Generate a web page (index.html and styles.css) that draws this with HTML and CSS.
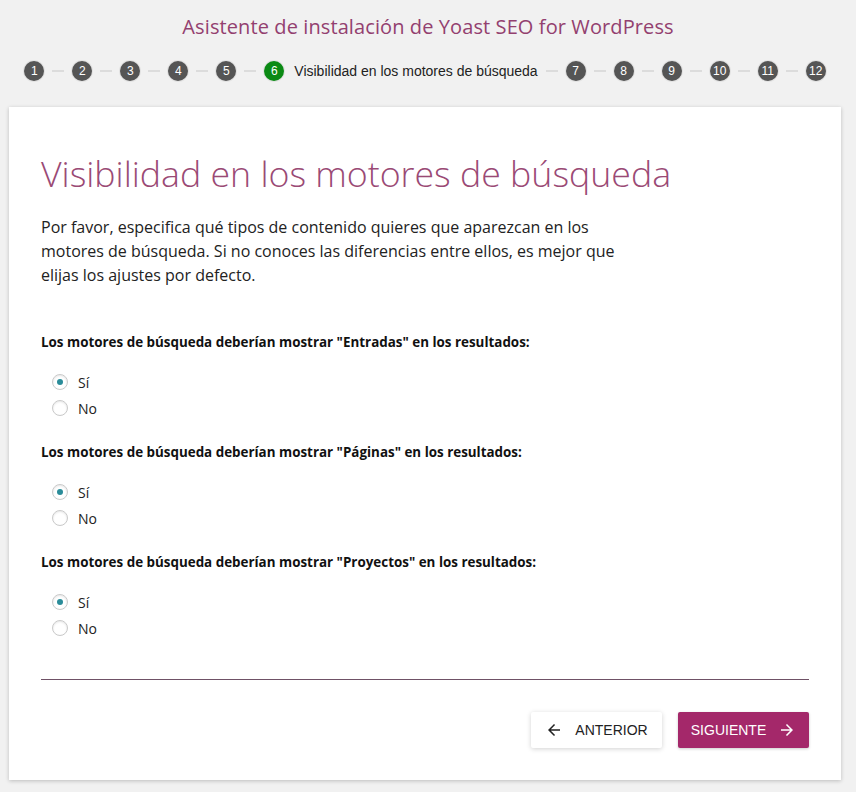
FILE: index.html
```html
<!DOCTYPE html>
<html lang="es">
<head>
<meta charset="utf-8">
<title>Asistente de instalación de Yoast SEO for WordPress</title>
<link rel="stylesheet" href="styles.css">
</head>
<body>
<header class="wizard-header">
  <h1 class="wizard-title">Asistente de instalación de Yoast SEO for WordPress</h1>
  <ol class="stepper">
    <li class="step"><span class="step-num">1</span></li>
    <li class="sep"></li>
    <li class="step"><span class="step-num">2</span></li>
    <li class="sep"></li>
    <li class="step"><span class="step-num">3</span></li>
    <li class="sep"></li>
    <li class="step"><span class="step-num">4</span></li>
    <li class="sep"></li>
    <li class="step"><span class="step-num">5</span></li>
    <li class="sep"></li>
    <li class="step active"><span class="step-num">6</span><span class="step-label">Visibilidad en los motores de búsqueda</span></li>
    <li class="sep"></li>
    <li class="step"><span class="step-num">7</span></li>
    <li class="sep"></li>
    <li class="step"><span class="step-num">8</span></li>
    <li class="sep"></li>
    <li class="step"><span class="step-num">9</span></li>
    <li class="sep"></li>
    <li class="step"><span class="step-num">10</span></li>
    <li class="sep"></li>
    <li class="step"><span class="step-num">11</span></li>
    <li class="sep"></li>
    <li class="step"><span class="step-num">12</span></li>
  </ol>
</header>

<main class="card">
  <h2 class="card-title">Visibilidad en los motores de búsqueda</h2>
  <p class="intro">Por favor, especifica qué tipos de contenido quieres que aparezcan en los motores de búsqueda. Si no conoces las diferencias entre ellos, es mejor que elijas los ajustes por defecto.</p>

  <fieldset class="question">
    <legend class="question-label">Los motores de búsqueda deberían mostrar "Entradas" en los resultados:</legend>
    <label class="radio"><input type="radio" name="q1" checked><span class="radio-dot"></span><span>Sí</span></label>
    <label class="radio"><input type="radio" name="q1"><span class="radio-dot"></span><span>No</span></label>
  </fieldset>

  <fieldset class="question">
    <legend class="question-label">Los motores de búsqueda deberían mostrar "Páginas" en los resultados:</legend>
    <label class="radio"><input type="radio" name="q2" checked><span class="radio-dot"></span><span>Sí</span></label>
    <label class="radio"><input type="radio" name="q2"><span class="radio-dot"></span><span>No</span></label>
  </fieldset>

  <fieldset class="question">
    <legend class="question-label">Los motores de búsqueda deberían mostrar "Proyectos" en los resultados:</legend>
    <label class="radio"><input type="radio" name="q3" checked><span class="radio-dot"></span><span>Sí</span></label>
    <label class="radio"><input type="radio" name="q3"><span class="radio-dot"></span><span>No</span></label>
  </fieldset>

  <hr class="divider">

  <div class="actions">
    <button class="btn btn-prev" type="button">
      <svg class="btn-icon" viewBox="0 0 24 24" width="18" height="18" aria-hidden="true"><path d="M20 11H7.83l5.59-5.59L12 4l-8 8 8 8 1.41-1.41L7.83 13H20v-2z" fill="currentColor"/></svg>
      <span>Anterior</span>
    </button>
    <button class="btn btn-next" type="button">
      <span>Siguiente</span>
      <svg class="btn-icon" viewBox="0 0 24 24" width="18" height="18" aria-hidden="true"><path d="M12 4l-1.41 1.41L16.17 11H4v2h12.17l-5.58 5.59L12 20l8-8z" fill="currentColor"/></svg>
    </button>
  </div>
</main>
</body>
</html>
```

FILE: styles.css
```css
* { box-sizing: border-box; }

html, body {
  margin: 0;
  padding: 0;
  background: #f1f1f1;
}

body {
  font-family: "Open Sans", "Noto Sans", sans-serif;
  color: #1e1e1e;
  padding-bottom: 12px;
}

.wizard-header {
  display: flex;
  flex-direction: column;
  align-items: center;
  padding-top: 12px;
}

.wizard-title {
  margin: 0;
  font-size: 20px;
  font-weight: 400;
  line-height: 30px;
  color: #93406f;
  letter-spacing: 0.1px;
}

.stepper {
  list-style: none;
  margin: 18px 0 0 -6px;
  padding: 0;
  display: flex;
  align-items: center;
  height: 22px;
}

.step {
  display: flex;
  align-items: center;
}

.step-num {
  width: 20px;
  height: 20px;
  border-radius: 50%;
  background: #555;
  color: #fff;
  font-family: "Liberation Sans", Arial, sans-serif;
  font-size: 12px;
  line-height: 20px;
  text-align: center;
  box-shadow: 0 0 0 1px #e2e2e2;
}

.step.active .step-num {
  background: #0b8a14;
}

.step-label {
  margin-left: 10px;
  font-family: "Liberation Sans", Arial, sans-serif;
  font-size: 14px;
  color: #222;
}

.sep {
  width: 12px;
  height: 2px;
  margin: 0 8px;
  background: #dcdcdc;
}

.card {
  width: 832px;
  margin: 25px 0 0 9px;
  background: #fff;
  box-shadow: 0 1px 4px rgba(0, 0, 0, 0.22);
  padding: 44px 32px 32px;
}

.card-title {
  margin: 0;
  font-size: 35.7px;
  font-weight: 300;
  line-height: 44px;
  color: #9a4a75;
}

.intro {
  margin: 20px 0 0;
  max-width: 580px;
  font-size: 16px;
  line-height: 24px;
  color: #222;
}

.question {
  border: 0;
  margin: 45px 0 0;
  padding: 0;
  min-width: 0;
}

.question + .question {
  margin-top: 21px;
}

.question-label {
  padding: 0;
  font-size: 13.4px;
  font-weight: 700;
  line-height: 20px;
  color: #111;
  margin-bottom: 17px;
}

.radio {
  display: flex;
  align-items: center;
  height: 26px;
  padding-left: 11px;
  font-size: 14px;
  color: #222;
}

.radio input {
  position: absolute;
  opacity: 0;
  width: 0;
  height: 0;
}

.radio-dot {
  width: 16px;
  height: 16px;
  border-radius: 50%;
  border: 1px solid #c9c9c9;
  box-shadow: inset 0 1px 2px rgba(0, 0, 0, 0.1);
  margin-right: 10px;
  display: flex;
  align-items: center;
  justify-content: center;
  background: #fff;
}

.radio input:checked + .radio-dot::after {
  content: "";
  width: 6px;
  height: 6px;
  border-radius: 50%;
  background: #2a8c99;
}

.divider {
  margin: 38px 0 0;
  border: 0;
  height: 1px;
  background: #6f5166;
}

.actions {
  display: flex;
  justify-content: flex-end;
  gap: 16px;
  margin-top: 32px;
}

.btn {
  display: flex;
  align-items: center;
  justify-content: center;
  gap: 12px;
  width: 131px;
  height: 36px;
  border: 0;
  border-radius: 2px;
  font-family: "Liberation Sans", Arial, sans-serif;
  font-size: 14px;
  text-transform: uppercase;
  cursor: pointer;
}

.btn-prev {
  background: #fff;
  color: #222;
  box-shadow: 0 1px 5px rgba(0, 0, 0, 0.18);
}

.btn-next {
  background: #a4286a;
  color: #fff;
  box-shadow: 0 1px 3px rgba(0, 0, 0, 0.2);
}

.btn-icon {
  flex: none;
}
```
